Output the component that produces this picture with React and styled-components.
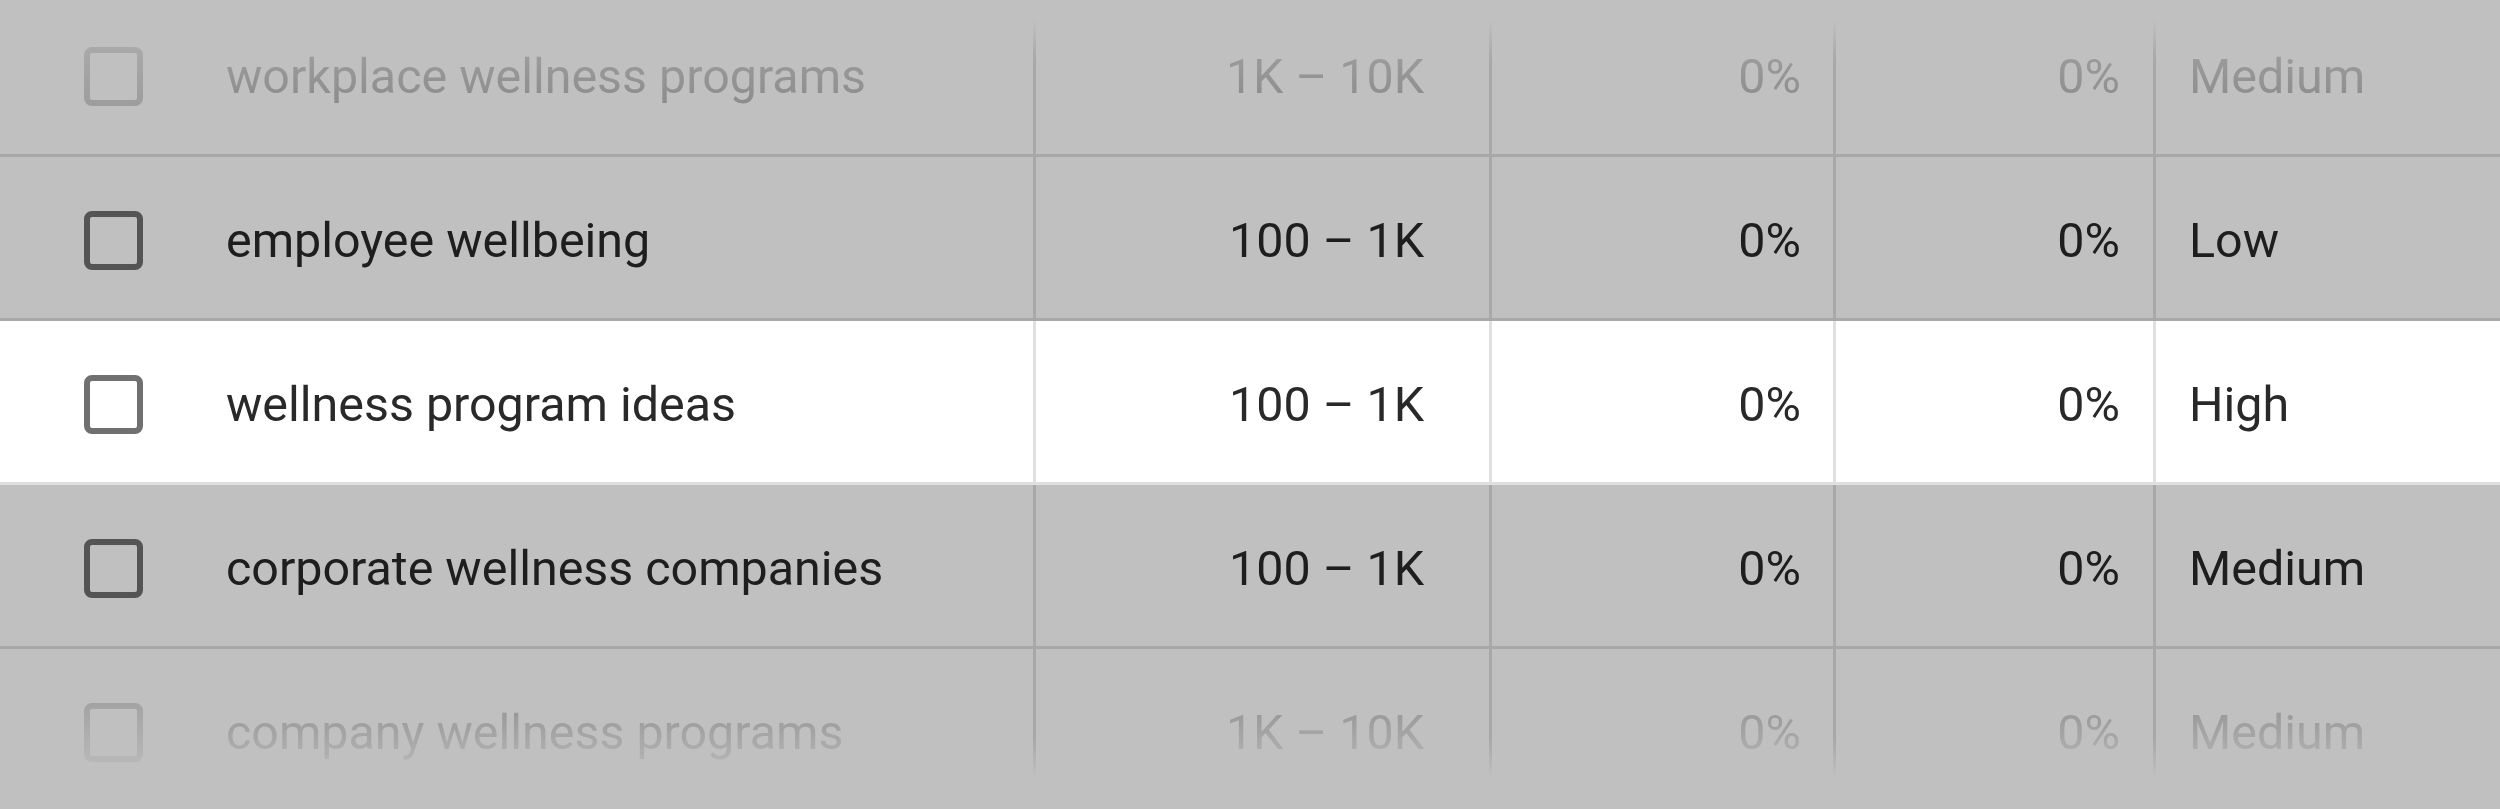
import React from "react";
import styled, { createGlobalStyle, css } from "styled-components";

const GlobalStyle = createGlobalStyle`
  html, body {
    margin: 0;
    padding: 0;
    background: #c0c0c0;
    overflow: hidden;
  }
  body {
    font-family: Roboto, "Liberation Sans", Arial, sans-serif;
  }
`;

const keywords = [
  { keyword: "workplace wellness programs", volume: "1K – 10K", ctr: "0%", share: "0%", level: "Medium", fade: "top" },
  { keyword: "employee wellbeing", volume: "100 – 1K", ctr: "0%", share: "0%", level: "Low" },
  { keyword: "wellness program ideas", volume: "100 – 1K", ctr: "0%", share: "0%", level: "High", active: true },
  { keyword: "corporate wellness companies", volume: "100 – 1K", ctr: "0%", share: "0%", level: "Medium" },
  { keyword: "company wellness programs", volume: "1K – 10K", ctr: "0%", share: "0%", level: "Medium", fade: "bottom" },
];

const lineColor = "#e0e0e0";

// gradient used for the column lines of the faded rows
const dividerFade = {
  top: `linear-gradient(to bottom, transparent 17%, ${lineColor} 42%)`,
  bottom: `linear-gradient(to bottom, ${lineColor} 56%, transparent 80%)`,
};

// mask used for the content of the faded rows
const contentFade = {
  top: "linear-gradient(to bottom, rgba(0,0,0,0.1), rgba(0,0,0,0.42))",
  bottom: "linear-gradient(to bottom, rgba(0,0,0,0.42) 0%, rgba(0,0,0,0.26) 35%, rgba(0,0,0,0.08) 70%, transparent 92%)",
};

export default function App() {
  return (
    <>
      <GlobalStyle />
      <Table>
        {keywords.map((row) => (
          <Row key={row.keyword} $dimmed={!row.active}>
            <Cell $fade={row.fade}>
              <Content $fade={row.fade}>
                <Checkbox type="button" aria-label={`select ${row.keyword}`} />
                <Keyword>{row.keyword}</Keyword>
              </Content>
            </Cell>
            <Cell $fade={row.fade}>
              <Content $fade={row.fade} $align="end" $pad="0 65px 0 0">
                {row.volume}
              </Content>
            </Cell>
            <Cell $fade={row.fade}>
              <Content $fade={row.fade} $align="end" $pad="0 32px 0 0">
                {row.ctr}
              </Content>
            </Cell>
            <Cell $fade={row.fade}>
              <Content $fade={row.fade} $align="end" $pad="0 33px 0 0">
                {row.share}
              </Content>
            </Cell>
            <Cell $fade={row.fade} $last>
              <Content $fade={row.fade} $pad="0 0 0 33px">
                {row.level}
              </Content>
            </Cell>
          </Row>
        ))}
      </Table>
    </>
  );
}

const Table = styled.div`
  margin-top: -7px;
  width: 2500px;
`;

const Row = styled.div`
  position: relative;
  display: grid;
  grid-template-columns: 1036px 456px 344px 320px 1fr;
  height: 164px;
  box-sizing: border-box;
  background: #fff;
  border-bottom: 3px solid ${lineColor};

  ${(p) =>
    p.$dimmed &&
    css`
      &::after {
        content: "";
        position: absolute;
        top: 0;
        left: 0;
        right: 0;
        bottom: -3px;
        background: rgba(0, 0, 0, 0.247);
        pointer-events: none;
      }
    `}
`;

const Cell = styled.div`
  display: flex;
  box-sizing: border-box;
  min-width: 0;
  border-right: ${(p) => (p.$last ? "0" : `3px solid ${lineColor}`)};
  ${(p) =>
    p.$fade &&
    !p.$last &&
    css`
      border-image: ${dividerFade[p.$fade]} 1;
    `}
`;

const Content = styled.div`
  flex: 1;
  display: flex;
  align-items: center;
  justify-content: ${(p) => (p.$align === "end" ? "flex-end" : "flex-start")};
  padding: ${(p) => p.$pad || "0 0 0 84px"};
  padding-top: 6px;
  font-size: 48.4px;
  color: #292929;
  white-space: nowrap;
  ${(p) =>
    p.$fade &&
    css`
      -webkit-mask-image: ${contentFade[p.$fade]};
      mask-image: ${contentFade[p.$fade]};
    `}
`;

const Checkbox = styled.button`
  flex: none;
  width: 59px;
  height: 59px;
  padding: 0;
  box-sizing: border-box;
  border: 6px solid #707070;
  border-radius: 8px;
  background: #fff;
  cursor: pointer;
`;

const Keyword = styled.span`
  margin-left: 83px;
`;
